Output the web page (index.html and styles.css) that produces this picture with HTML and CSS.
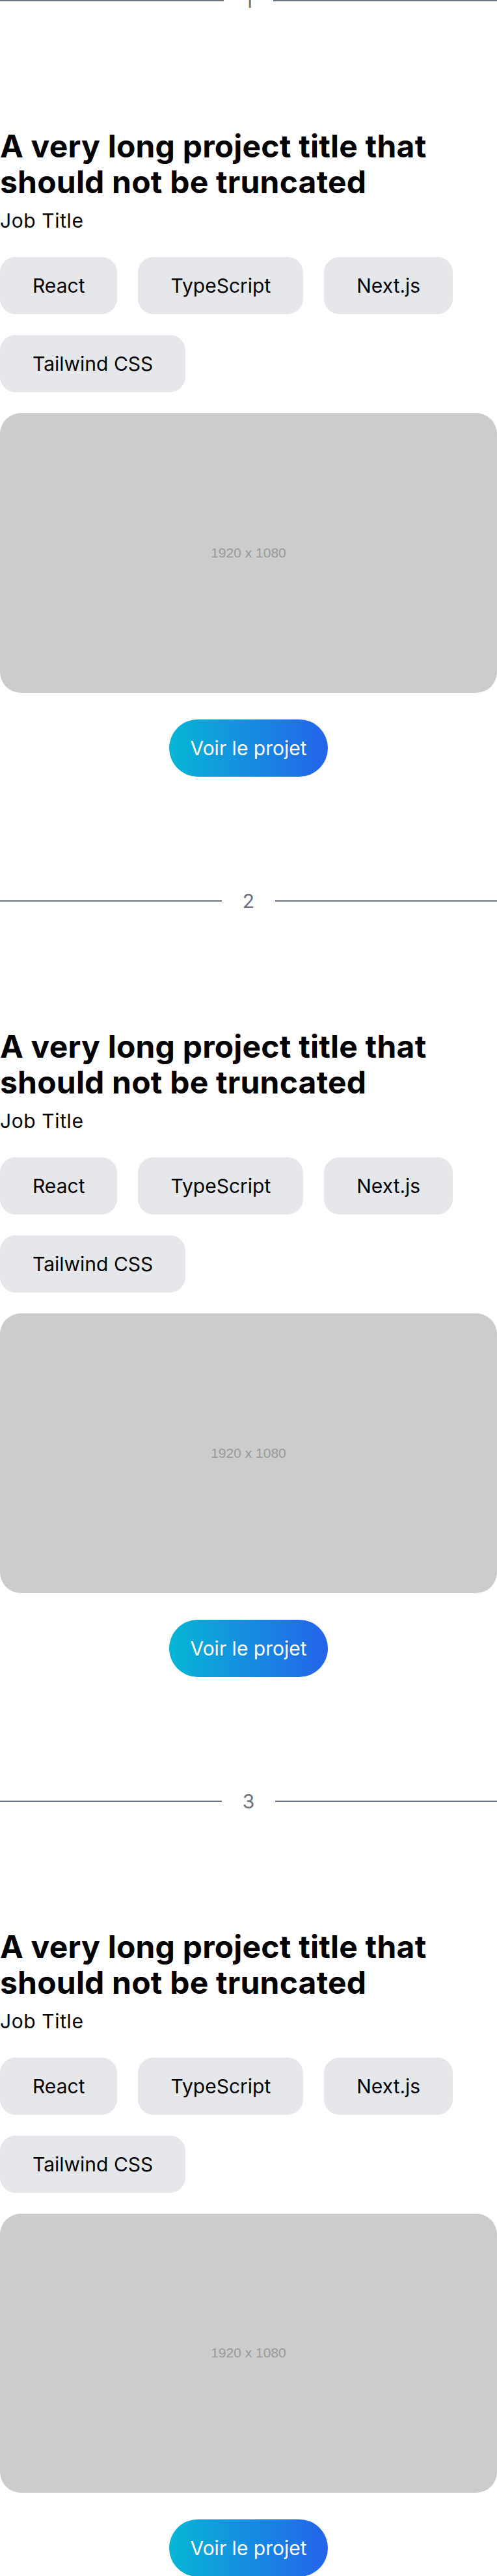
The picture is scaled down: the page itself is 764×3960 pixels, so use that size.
FILE: index.html
```html
<!DOCTYPE html>
<html lang="fr">
<head>
<meta charset="utf-8">
<title>Projets</title>
<link rel="stylesheet" href="styles.css">
</head>
<body>
<main class="page">
  <section class="section">
    <div class="divider"><span class="divider-line"></span><span class="divider-num">1</span><span class="divider-line"></span></div>
    <article class="project">
      <h2 class="project-title">A very long project title that should not be truncated</h2>
      <p class="project-job">Job Title</p>
      <ul class="tags">
        <li class="tag">React</li>
        <li class="tag">TypeScript</li>
        <li class="tag">Next.js</li>
        <li class="tag">Tailwind CSS</li>
      </ul>
      <div class="placeholder"><span class="placeholder-text">1920 x 1080</span></div>
      <div class="cta-row"><a class="cta" href="#">Voir le projet</a></div>
    </article>
  </section>
  <section class="section">
    <div class="divider"><span class="divider-line"></span><span class="divider-num">2</span><span class="divider-line"></span></div>
    <article class="project">
      <h2 class="project-title">A very long project title that should not be truncated</h2>
      <p class="project-job">Job Title</p>
      <ul class="tags">
        <li class="tag">React</li>
        <li class="tag">TypeScript</li>
        <li class="tag">Next.js</li>
        <li class="tag">Tailwind CSS</li>
      </ul>
      <div class="placeholder"><span class="placeholder-text">1920 x 1080</span></div>
      <div class="cta-row"><a class="cta" href="#">Voir le projet</a></div>
    </article>
  </section>
  <section class="section">
    <div class="divider"><span class="divider-line"></span><span class="divider-num">3</span><span class="divider-line"></span></div>
    <article class="project">
      <h2 class="project-title">A very long project title that should not be truncated</h2>
      <p class="project-job">Job Title</p>
      <ul class="tags">
        <li class="tag">React</li>
        <li class="tag">TypeScript</li>
        <li class="tag">Next.js</li>
        <li class="tag">Tailwind CSS</li>
      </ul>
      <div class="placeholder"><span class="placeholder-text">1920 x 1080</span></div>
      <div class="cta-row"><a class="cta" href="#">Voir le projet</a></div>
    </article>
  </section>
</main>
</body>
</html>
```

FILE: styles.css
```css
html, body {
  margin: 0;
  padding: 0;
  background: #ffffff;
}

body {
  font-family: Inter, "Noto Sans", "Liberation Sans", sans-serif;
  color: #000000;
}

.page {
  margin-top: -17px;
  display: flex;
  flex-direction: column;
}

.section {
  padding-bottom: 173px;
}

.section:last-child {
  padding-bottom: 0;
}

.divider {
  display: flex;
  align-items: center;
  height: 36px;
}

.divider-line {
  flex: 1;
  height: 2px;
  background: #6b7280;
}

.divider-num {
  padding: 0 32px;
  font-size: 30px;
  line-height: 36px;
  color: #6b7280;
}

.project {
  margin-top: 178px;
}

.project-title {
  margin: 0;
  font-size: 48px;
  line-height: 55px;
  font-weight: 700;
  letter-spacing: 0.2px;
}

.project-job {
  margin: 14px 0 0;
  font-size: 30px;
  line-height: 36px;
  letter-spacing: 0.6px;
}

.tags {
  list-style: none;
  margin: 38px 0 0;
  padding: 0;
  display: flex;
  flex-wrap: wrap;
  gap: 32px;
}

.tag {
  padding: 24px 50px;
  font-size: 30px;
  line-height: 40px;
  background: #e5e7eb;
  border-radius: 24px;
}

.placeholder {
  margin-top: 32px;
  aspect-ratio: 16 / 9;
  background: #cccccc;
  border-radius: 32px;
  display: flex;
  align-items: center;
  justify-content: center;
}

.placeholder-text {
  font-family: "Liberation Sans", Arial, sans-serif;
  font-size: 21px;
  color: #999999;
}

.cta-row {
  margin-top: 41px;
  display: flex;
  justify-content: center;
}

.cta {
  display: block;
  padding: 24px 32px;
  font-size: 30px;
  line-height: 40px;
  color: #ffffff;
  text-decoration: none;
  border-radius: 9999px;
  background: linear-gradient(to right, #06b6d4, #2563eb);
}
```
